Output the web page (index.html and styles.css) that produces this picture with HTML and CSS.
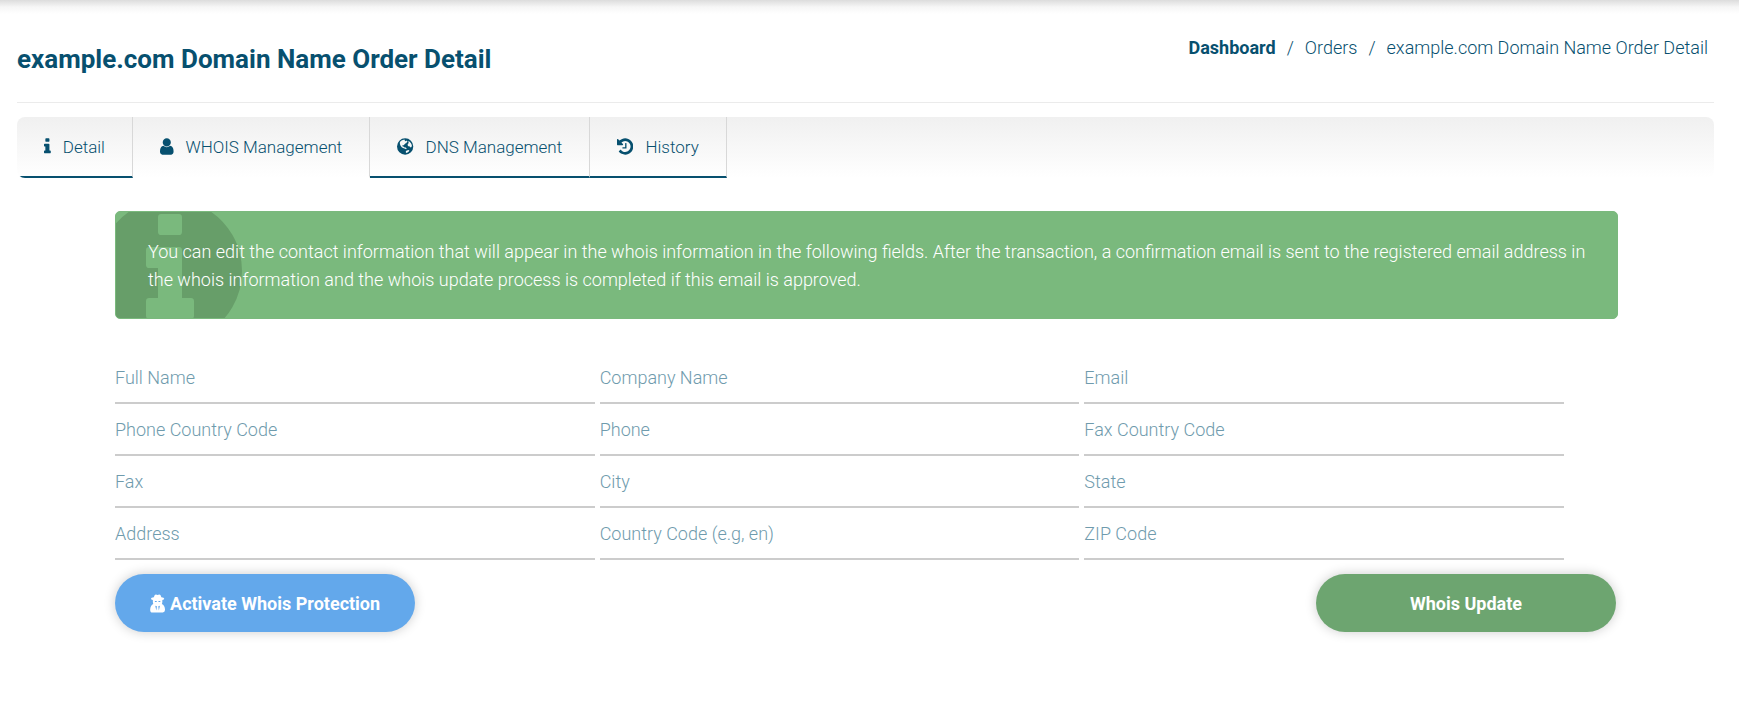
FILE: index.html
```html
<!DOCTYPE html>
<html lang="en">
<head>
<meta charset="utf-8">
<title>example.com Domain Name Order Detail</title>
<link rel="stylesheet" href="styles.css">
</head>
<body>
<main class="page">
  <header class="page-header">
    <h1 class="page-title">example.com Domain Name Order Detail</h1>
    <nav class="breadcrumb" aria-label="Breadcrumb">
      <a class="crumb crumb-home" href="#">Dashboard</a>
      <span class="crumb-sep">/</span>
      <a class="crumb" href="#">Orders</a>
      <span class="crumb-sep">/</span>
      <span class="crumb">example.com Domain Name Order Detail</span>
    </nav>
  </header>

  <nav class="tabs" aria-label="Order sections">
    <a class="tab" href="#detail">
      <svg class="tab-icon" viewBox="576 0 640 1792" aria-hidden="true"><path d="M1216 1344v128q0 26-19 45t-45 19h-512q-26 0-45-19t-19-45v-128q0-26 19-45t45-19h64v-384h-64q-26 0-45-19t-19-45v-128q0-26 19-45t45-19h384q26 0 45 19t19 45v576h64q26 0 45 19t19 45zm-128-1152v192q0 26-19 45t-45 19h-256q-26 0-45-19t-19-45v-192q0-26 19-45t45-19h256q26 0 45 19t19 45z"/></svg>
      <span>Detail</span>
    </a>
    <a class="tab tab-active" href="#whois" aria-current="page">
      <svg class="tab-icon" viewBox="256 0 1280 1792" aria-hidden="true"><path d="M1536 1399q0 109-62.5 187t-150.5 78h-854q-88 0-150.5-78t-62.5-187q0-85 8.5-160.5t31.5-152 58.5-131 94-89 134.5-34.5q131 128 313 128t313-128q76 0 134.5 34.5t94 89 58.5 131 31.5 152 8.5 160.5zm-256-887q0 159-112.5 271.5t-271.5 112.5-271.5-112.5-112.5-271.5 112.5-271.5 271.5-112.5 271.5 112.5 112.5 271.5z"/></svg>
      <span>WHOIS Management</span>
    </a>
    <a class="tab" href="#dns">
      <svg class="tab-icon" viewBox="128 0 1536 1792" aria-hidden="true"><path fill-rule="evenodd" d="M896 128a768 768 0 1 0 0 1536a768 768 0 1 0 0-1536zM400 480Q540 310 740 260L900 270L840 350L960 400L1040 330L1120 440L1020 480L1060 560L940 580L860 680L780 720L800 800L700 760L620 820L680 900L780 920L840 980L960 1000L1040 1090L980 1160L900 1120L760 1060L600 980L480 840L400 660zM1140 420L1300 420Q1480 560 1530 780L1500 940L1400 1000L1340 900L1200 880L1120 760L1180 620L1260 560zM1000 1300L1200 1220L1300 1280L1200 1420L1020 1500L940 1420z"/></svg>
      <span>DNS Management</span>
    </a>
    <a class="tab" href="#history">
      <svg class="tab-icon" viewBox="128 0 1536 1792" aria-hidden="true"><path d="M1664 896q0 156-61 298t-164 245-245 164-298 61q-172 0-327-72.5t-264-204.5q-7-10-6.5-22.5t8.5-20.5l137-138q10-9 25-9 16 2 23 12 73 95 179 147t225 52q104 0 198.5-40.5t163.5-109.5 109.5-163.5 40.5-198.5-40.5-198.5-109.5-163.5-163.5-109.5-198.5-40.5q-98 0-188 35.5t-160 101.5l137 138q31 30 14 69-17 40-59 40h-448q-26 0-45-19t-19-45v-448q0-42 40-59 39-17 69 14l130 129q107-101 244.5-156.5t284.5-55.5q156 0 298 61t245 164 164 245 61 298zm-640-288v448q0 14-9 23t-23 9h-320q-14 0-23-9t-9-23v-64q0-14 9-23t23-9h224v-352q0-14 9-23t23-9h64q14 0 23 9t9 23z"/></svg>
      <span>History</span>
    </a>
  </nav>

  <section class="content" id="whois">
    <div class="notice">
      <svg class="notice-icon" viewBox="0 0 1792 1792" aria-hidden="true"><path d="M1152 1376v-160q0-14-9-23t-23-9h-96v-512q0-14-9-23t-23-9h-320q-14 0-23 9t-9 23v160q0 14 9 23t23 9h96v320h-96q-14 0-23 9t-9 23v160q0 14 9 23t23 9h448q14 0 23-9t9-23zm-128-896v-160q0-14-9-23t-23-9h-192q-14 0-23 9t-9 23v160q0 14 9 23t23 9h192q14 0 23-9t9-23zm640 416q0 209-103 385.5t-279.5 279.5-385.5 103-385.5-103-279.5-279.5-103-385.5 103-385.5 279.5-279.5 385.5-103 385.5 103 279.5 279.5 103 385.5z"/></svg>
      <p class="notice-text">You can edit the contact information that will appear in the whois information in the following fields. After the transaction, a confirmation email is sent to the registered email address in the whois information and the whois update process is completed if this email is approved.</p>
    </div>

    <form class="whois-form">
      <div class="fields">
        <input class="field" type="text" placeholder="Full Name" aria-label="Full Name">
        <input class="field" type="text" placeholder="Company Name" aria-label="Company Name">
        <input class="field" type="text" placeholder="Email" aria-label="Email">
        <input class="field" type="text" placeholder="Phone Country Code" aria-label="Phone Country Code">
        <input class="field" type="text" placeholder="Phone" aria-label="Phone">
        <input class="field" type="text" placeholder="Fax Country Code" aria-label="Fax Country Code">
        <input class="field" type="text" placeholder="Fax" aria-label="Fax">
        <input class="field" type="text" placeholder="City" aria-label="City">
        <input class="field" type="text" placeholder="State" aria-label="State">
        <input class="field" type="text" placeholder="Address" aria-label="Address">
        <input class="field" type="text" placeholder="Country Code (e.g, en)" aria-label="Country Code (e.g, en)">
        <input class="field" type="text" placeholder="ZIP Code" aria-label="ZIP Code">
      </div>
      <div class="actions">
        <button class="button button-blue" type="button">
          <svg class="button-icon" viewBox="0 0 16 20" aria-hidden="true"><path fill-rule="evenodd" d="M5 1Q6 0 8 1Q10 0 11 1L12 3.500Q15 4 15 5Q15 6 13 6.300V8Q13 10 12.500 10.500Q15.500 12 15.800 16Q16 19.500 13.500 19.500H2.500Q0 19.500 .2 16Q.5 12 3.500 10.500Q3 10 3 8V6.300Q1 6 1 5Q1 4 4 3.500zM5 7.400H7.200L7 8.300H5.300zM8.800 7.400H11L10.700 8.300H9zM5.500 12.500L7.300 13L6.700 17.500zM10.500 12.500L8.700 13L9.300 17.500z"/></svg>
          <span>Activate Whois Protection</span>
        </button>
        <button class="button button-green" type="submit">Whois Update</button>
      </div>
    </form>
  </section>
</main>
</body>
</html>
```
FILE: styles.css
```css
* { box-sizing: border-box; }

body {
  margin: 0;
  background: #fff linear-gradient(#dcdcdc, #f6f6f6 7px, #fff 14px) no-repeat top / 100% 14px;
  color: #07506f;
  font-family: Roboto, "Open Sans", sans-serif;
  font-size: 18px;
  font-weight: 300;
}

a { color: inherit; text-decoration: none; }

.page { padding: 32px 25px 32px 17px; }

.page-header {
  display: flex;
  justify-content: space-between;
  align-items: flex-start;
  padding-bottom: 22px;
  border-bottom: 1px solid #ebebeb;
}

.page-title {
  margin: 6px 0 0;
  font-size: 26px;
  line-height: 42px;
  font-weight: 700;
}

.breadcrumb {
  display: flex;
  gap: 11px;
  padding-right: 6px;
  line-height: 32px;
}

.crumb-home { font-weight: 700; }

.tabs {
  display: flex;
  height: 61px;
  margin-top: 14px;
  border-radius: 8px;
  overflow: hidden;
  background: linear-gradient(#f0f0f0, #fff);
}

.tab {
  display: flex;
  align-items: center;
  gap: 12px;
  padding: 0 27px;
  border-right: 1px solid #d8d8d8;
  border-bottom: 2px solid #07506f;
  font-size: 17px;
}

.tab-active { border-bottom-color: transparent; }

.tab-icon { height: 19px; fill: currentColor; }

.content { padding: 33px 96px 0 98px; }

.notice {
  position: relative;
  overflow: hidden;
  padding: 26px 16px 24px 32px;
  border: 1px solid #7ab97d;
  border-radius: 5px;
  background: #7ab97d;
  color: #fff;
}

.notice-icon {
  position: absolute;
  left: -30px;
  top: -25px;
  width: 168px;
  fill: #679e69;
}

.notice-text {
  position: relative;
  margin: 0;
  line-height: 28px;
}

.whois-form { margin-top: 33px; }

.fields {
  display: grid;
  grid-template-columns: repeat(3, 1fr);
  gap: 0 5px;
  margin-right: 54px;
}

.field {
  width: 100%;
  min-width: 0;
  height: 52px;
  padding: 0;
  border: 0;
  border-bottom: 2px solid #ccc;
  outline: 0;
  background: transparent;
  color: #07506f;
  font: inherit;
}

.field::placeholder { color: #6f9bad; opacity: 1; }

.actions {
  display: flex;
  justify-content: space-between;
  padding: 14px 2px 0 0;
}

.button {
  display: flex;
  align-items: center;
  justify-content: center;
  gap: 5px;
  width: 300px;
  height: 58px;
  padding: 0;
  border: 0;
  border-radius: 29px;
  box-shadow: 0 0 12px rgba(0, 0, 0, .2);
  color: #fff;
  font: inherit;
  font-weight: 700;
}

.button-blue { background: #63a8eb; }
.button-green { background: #6da570; }

.button-icon { height: 19px; fill: currentColor; }
```
